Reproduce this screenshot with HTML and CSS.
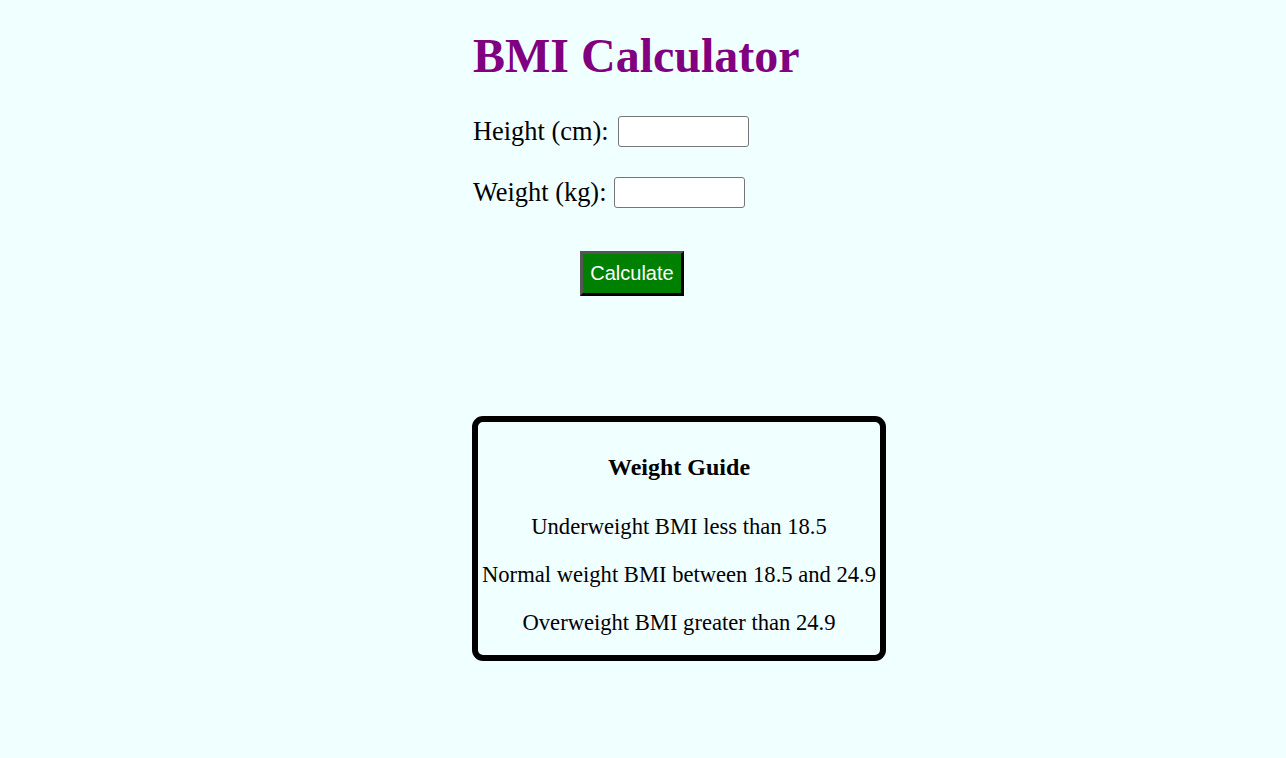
FILE: index.html
```html
<!DOCTYPE html>
<html lang="en">
<head>
<meta charset="utf-8">
<title>BMI Calculator</title>
<link rel="stylesheet" href="styles.css">
</head>
<body>
<main class="container">
  <h1 class="title">BMI Calculator</h1>
  <form class="form">
    <div class="row">
      <label class="label" for="height">Height (cm):</label>
      <input class="field" id="height" type="text">
    </div>
    <div class="row">
      <label class="label" for="weight">Weight (kg):</label>
      <input class="field field-w" id="weight" type="text">
    </div>
    <button class="calc" type="button">Calculate</button>
  </form>
  <section class="guide">
    <h3 class="guide-title">Weight Guide</h3>
    <p class="guide-line">Underweight BMI less than 18.5</p>
    <p class="guide-line">Normal weight BMI between 18.5 and 24.9</p>
    <p class="guide-line">Overweight BMI greater than 24.9</p>
  </section>
</main>
</body>
</html>
```
FILE: styles.css
```css
html, body {
  background: #f0ffff;
}
body {
  margin: 8px;
  font-family: "Liberation Serif", "Times New Roman", serif;
  color: #000;
}
.container {
  width: 340px;
  margin: 0 auto;
}
.title {
  margin: 20px 0 0;
  font-size: 48px;
  font-weight: bold;
  color: #800080;
  line-height: 55px;
}
.form {
  margin-top: 33px;
  display: flex;
  flex-direction: column;
  align-items: flex-start;
}
.row {
  display: flex;
  align-items: center;
  height: 31px;
  margin-bottom: 30px;
}
.row:last-of-type {
  margin-bottom: 0;
}
.label {
  font-size: 26.4px;
  line-height: 30px;
  margin-top: -2px;
}
.field {
  box-sizing: border-box;
  width: 131px;
  height: 31px;
  margin-left: 9px;
  border: 1px solid #767676;
  border-radius: 3px;
  background: #fff;
  padding: 1px 2px;
}
.field-w {
  margin-left: 8px;
}
.calc {
  margin: 43px 0 0 107px;
  box-sizing: border-box;
  width: 104px;
  height: 45px;
  padding: 0;
  background: #008000;
  color: #fff;
  font-family: "Liberation Sans", Arial, sans-serif;
  font-size: 20px;
  border-style: solid;
  border-width: 3px;
  border-color: #555 #000 #000 #555;
}
.guide {
  width: max-content;
  margin-top: 120px;
  margin-left: -1px;
  padding: 0 4px;
  border: 6px solid #000;
  border-radius: 11px;
  text-align: center;
}
.guide-title {
  font-size: 24px;
  font-weight: bold;
  margin: 32px 0 32px;
  line-height: 27.6px;
}
.guide-line {
  font-size: 22.6px;
  margin: 22.4px 0;
}
.guide-title + .guide-line {
  margin-top: 0;
}
.guide-line:last-child {
  margin-bottom: 19px;
}
```
